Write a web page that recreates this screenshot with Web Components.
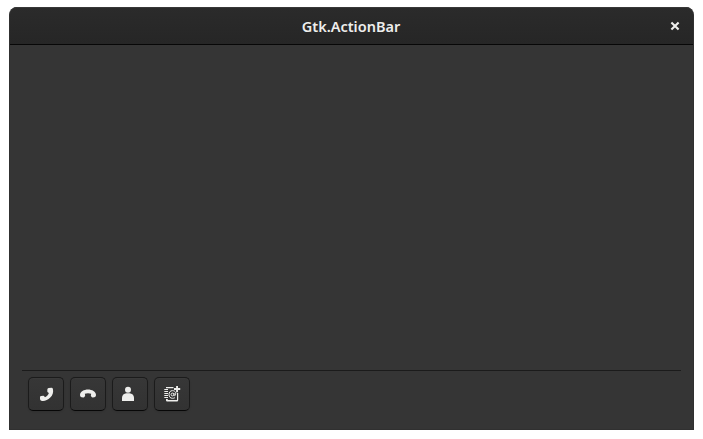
<!DOCTYPE html>
<html lang="en"><head><meta charset="utf-8"><title>Gtk.ActionBar</title>
<style>body{margin:0;background:#fff;font-family:"Noto Sans","Open Sans",sans-serif}</style></head>
<body>
<gtk-window>
  <header-bar slot="titlebar">Gtk.ActionBar</header-bar>
  <action-bar>
    <icon-button icon="call" label="Start call"></icon-button>
    <icon-button icon="hangup" label="Stop call"></icon-button>
    <icon-button icon="contact" label="Contact"></icon-button>
    <icon-button icon="address" label="New address book"></icon-button>
  </action-bar>
</gtk-window>
<script>
const icons = {
  call: '<path d="M9.4 3 Q9.6 2.1 10.6 1.9 L13.6 1.8 Q14.6 1.8 14.9 2.9 C15.6 5.8 14.8 9 12.3 11.6 C9.7 14.3 6.6 15.3 3.9 14.9 Q2 14.4 2 12.9 L2 11.1 Q2.1 10.2 3.1 10 L5.2 9.7 Q6 9.6 6.4 10.4 L7 11.2 C8.8 10.6 10.4 8.9 10.9 7.1 L10.1 6.4 Q9.3 5.9 9.3 5.2Z"/>',
  hangup: '<path d="M0 9.1 C0 5.6 4 3.5 8 3.5 C12 3.5 16 5.6 16 9.1 C16 10.3 15.4 11.2 14.3 11.3 L12.8 11.4 Q11.9 11.5 11.4 10.7 L10.8 9.5 L11.2 7.7 C9.4 7 6.6 7 4.8 7.7 L5.2 9.5 L4.6 10.7 Q4.1 11.5 3.2 11.4 L1.7 11.3 C.6 11.2 0 10.3 0 9.1Z"/>',
  contact: '<circle cx="6" cy="3.7" r="3"/><path d="M0 15V11.8C0 9.2 2 7.4 4.4 7.3H7.6C10 7.4 12 9.2 12 11.8V15Z"/>',
  address: '<path d="M2 1H9.5V2.3H3.8V14H13V7H14.2V14.2Q14.2 15.6 13 15.6H3.2Q2 15.6 2 14.5V13H3.8V2.3H2Z"/><path d="M12.1 0H14V2.1H16.2V4H14V6.2H12.1V4H10V2.1H12.1Z"/><path d="M.3 3.5H4M.3 5.5H4M.3 7.5H4M.3 9.5H4M.3 11.5H4" stroke="currentColor"/><g fill="none" stroke="currentColor"><circle cx="8.5" cy="8.5" r="1.4"/><path d="M10 7V9.2Q10.4 10.3 11.3 9.3C12.6 6.2 10.6 4.6 8.5 4.6C6.2 4.6 5 6.4 5 8.5C5 10.9 6.4 12.3 8.5 12.3Q9.8 12.3 10.9 11.7"/></g>'
};
class GtkWindow extends HTMLElement {
  constructor(){super();this.attachShadow({mode:'open'}).innerHTML=`<style>
    :host{display:flex;flex-direction:column;box-sizing:border-box;width:685px;height:423px;margin:7px 9px 9px;background:#353535;border:1px solid #303030;border-top:0;border-radius:8px 8px 0 0;overflow:hidden}
    main{flex:1;display:flex;flex-direction:column;justify-content:flex-end;padding:0 12px 11px}
  </style><slot name="titlebar"></slot><main><slot></slot></main>`}
}
class HeaderBar extends HTMLElement {
  constructor(){super();this.attachShadow({mode:'open'}).innerHTML=`<style>
    :host{display:grid;grid-template-columns:36px 1fr 36px;align-items:center;box-sizing:border-box;height:38px;margin:0 -1px;background:linear-gradient(#2b2b2b,#262626);border-bottom:1px solid #070707;box-shadow:inset 0 1px #383838;border-radius:8px 8px 0 0;color:#eeeeec;font-size:14.5px;font-weight:600}
    .title{grid-column:2;text-align:center;line-height:20px;padding-right:1px;white-space:nowrap}
    button{all:unset;display:grid;place-items:center;width:36px;height:37px}
    svg{display:block;width:10px;height:10px;margin:0 2px 0 0}
  </style><span class="title"><slot></slot></span><button aria-label="Close"><svg viewBox="0 0 10 10"><path d="M1.4 1.4L8.6 8.6M8.6 1.4L1.4 8.6" stroke="#eeeeec" stroke-width="2.1"/></svg></button>`}
}
class ActionBar extends HTMLElement {
  constructor(){super();this.attachShadow({mode:'open'}).innerHTML=`<style>
    :host{display:flex;gap:6px;box-sizing:border-box;height:48px;padding:6px 6px 7px;border-top:1px solid #1b1b1b}
  </style><slot></slot>`}
}
class IconButton extends HTMLElement {
  constructor(){super();this.attachShadow({mode:'open'}).innerHTML=`<style>
    :host{display:block;width:36px;height:34px}
    button{all:unset;display:grid;place-items:center;box-sizing:border-box;width:100%;height:100%;border:1px solid #1b1b1b;border-bottom-color:#070707;border-radius:5px;background:linear-gradient(#373737,#323232);box-shadow:inset 0 1px #3a3a3a,0 1px 2px #0000001a;color:#eeeeec}
    svg{display:block;width:16px;height:16px;overflow:visible}
  </style><button aria-label="${this.getAttribute('label')}"><svg viewBox="0 0 16 16" fill="currentColor">${icons[this.getAttribute('icon')]}</svg></button>`}
}
customElements.define('gtk-window',GtkWindow);
customElements.define('header-bar',HeaderBar);
customElements.define('action-bar',ActionBar);
customElements.define('icon-button',IconButton);
</script>
</body></html>
